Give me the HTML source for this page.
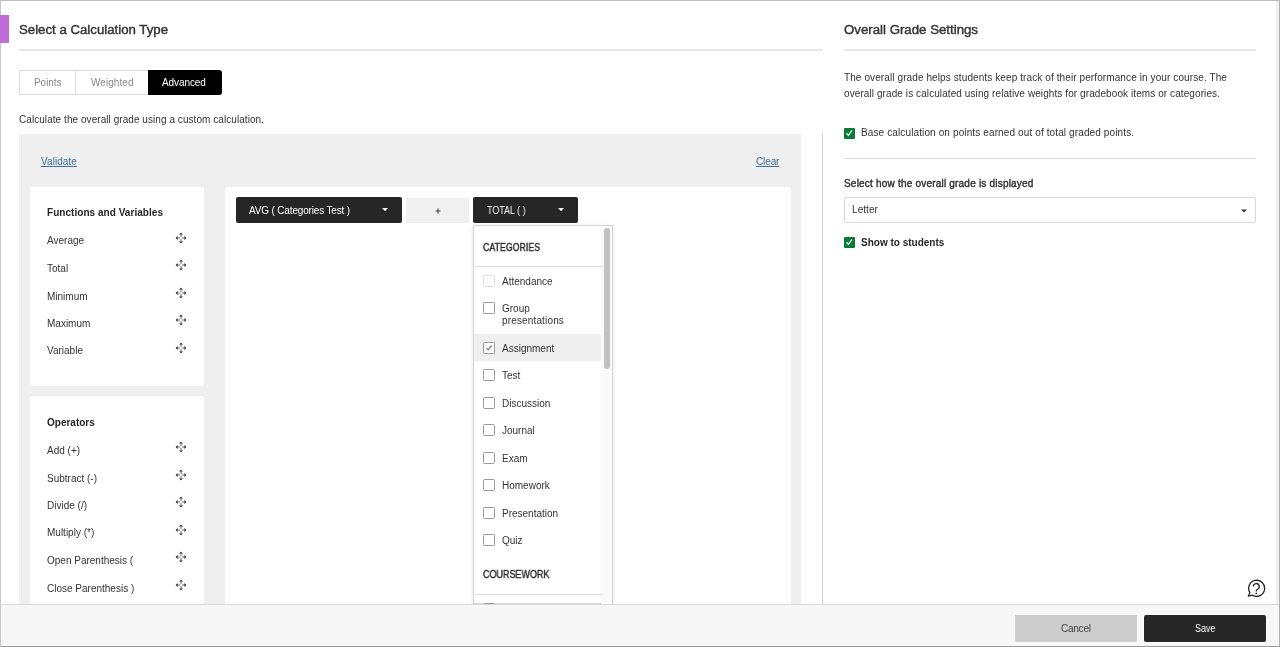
<!DOCTYPE html>
<html><head><meta charset="utf-8"><title>Calculation</title>
<style>
html,body{margin:0;padding:0;width:1280px;height:647px;overflow:hidden;background:#fff;}
body{position:relative;font-family:"Liberation Sans",sans-serif;}
.b{position:absolute;}
.t{position:absolute;white-space:nowrap;font-family:"Liberation Sans",sans-serif;will-change:transform;}
</style></head><body>

<div class='b' style='left:0;top:0;width:1280px;height:1px;background:#bdbdbd'></div>
<div class='b' style='left:0;top:0;width:1px;height:647px;background:#c6c6c6;z-index:8'></div>
<div class='b' style='left:1279px;top:0;width:1px;height:647px;background:#b0b0b0'></div>
<div class='b' style='left:1276px;top:1px;width:3px;height:603px;background:#f0f0f0'></div>
<div class='b' style='left:0;top:15px;width:9px;height:28px;background:#c06cd6;z-index:9'></div>
<div class='b' style='left:19px;top:49px;width:804px;height:2px;background:#e9e9e9'></div>
<div class='b' style='left:19px;top:70px;width:130px;height:25px;border:1px solid #dcdcdc;border-right:none;border-radius:1px 0 0 1px;box-sizing:border-box;background:#fff'></div>
<div class='b' style='left:75px;top:70px;width:1px;height:25px;background:#dcdcdc'></div>
<div class='b' style='left:148px;top:70px;width:74px;height:25px;background:#000;border-radius:0 3px 3px 0'></div>
<div class='b' style='left:19px;top:134px;width:782px;height:470px;background:#efefef'></div>
<div class='b' style='left:30px;top:187px;width:174px;height:199px;background:#fff;border-radius:2px'></div>
<div class='b' style='left:30px;top:396px;width:174px;height:208px;background:#fff;border-radius:2px'></div>
<div class='b' style='left:225px;top:187px;width:566px;height:418px;background:#fff;border-radius:2px'></div>
<div class='b' style='left:235.6px;top:197.3px;width:166.4px;height:25.4px;background:#262626;border-radius:2px'></div>
<div class='b' style='left:406px;top:197.5px;width:63px;height:25px;background:#f0f0f0'></div>
<div class='b' style='left:473.4px;top:197.3px;width:104.6px;height:25.4px;background:#262626;border-radius:2px'></div>
<div class='b' style='left:473px;top:225px;width:140px;height:379px;background:#fff;border:1px solid #d6d6d6;box-sizing:border-box;box-shadow:0 1px 4px rgba(0,0,0,0.12)'></div>
<div class='b' style='left:601px;top:226px;width:11px;height:378px;background:#fafafa'></div>
<div class='b' style='left:604.2px;top:228px;width:5.8px;height:141px;background:#c1c1c1;border-radius:3px'></div>
<div class='b' style='left:474px;top:266px;width:129px;height:1px;background:#dedede'></div>
<div class='b' style='left:474px;top:334.3px;width:127px;height:26.3px;background:#efefef'></div>
<div class='b' style='left:474px;top:593.5px;width:129px;height:1px;background:#dedede'></div>
<div class='b' style='left:822px;top:133px;width:1px;height:471px;background:#cfcfcf'></div>
<div class='b' style='left:844px;top:49px;width:412px;height:2px;background:#e9e9e9'></div>
<div class='b' style='left:844px;top:158px;width:412px;height:1px;background:#dadada'></div>
<div class='b' style='left:844px;top:197px;width:412px;height:26px;border:1px solid #d9d9d9;border-radius:2px;box-sizing:border-box;background:#fff'></div>
<div class='b' style='left:1px;top:604px;width:1278px;height:42px;background:#f7f7f7;border-top:1px solid #dadada;box-sizing:border-box;z-index:5'></div>
<div class='b' style='left:0;top:646px;width:1280px;height:1px;background:#9a9a9a;z-index:6'></div>
<div class='b' style='z-index:6;left:1015px;top:615px;width:122px;height:27px;background:#cdcdcd;border-radius:1px;box-shadow:0 0 0 1px #fff'></div>
<div class='b' style='z-index:6;left:1144px;top:615px;width:122px;height:27px;background:#262626;border-radius:2px;box-shadow:0 0 0 1px #fff'></div>
<div class='t' style='left:19.00px;top:22.00px;font-size:12.5px;line-height:17.5px;font-weight:normal;-webkit-text-stroke:0.4px #333;color:#333;letter-spacing:0.000px;transform:scaleX(1.0580);transform-origin:0 0;'>Select a Calculation Type</div>
<div class='t' style='left:33.90px;top:76.00px;font-size:10px;line-height:14.0px;font-weight:normal;color:#8a8a8a;letter-spacing:-0.049px;'>Points</div>
<div class='t' style='left:90.50px;top:76.00px;font-size:10px;line-height:14.0px;font-weight:normal;color:#8a8a8a;letter-spacing:0.065px;'>Weighted</div>
<div class='t' style='left:162.30px;top:76.00px;font-size:10px;line-height:14.0px;font-weight:normal;color:#fff;letter-spacing:-0.086px;'>Advanced</div>
<div class='t' style='left:19.00px;top:113.00px;font-size:10px;line-height:14.0px;font-weight:normal;color:#333;letter-spacing:0.058px;'>Calculate the overall grade using a custom calculation.</div>
<div class='t' style='left:41.00px;top:155.00px;font-size:10px;line-height:14.0px;font-weight:normal;color:#3a6f96;letter-spacing:0.074px;text-decoration:underline'>Validate</div>
<div class='t' style='left:755.60px;top:155.00px;font-size:10px;line-height:14.0px;font-weight:normal;color:#3a6f96;letter-spacing:-0.121px;text-decoration:underline'>Clear</div>
<div class='t' style='left:47.00px;top:206.00px;font-size:10px;line-height:14.0px;font-weight:bold;color:#262626;letter-spacing:0.042px;'>Functions and Variables</div>
<div class='t' style='left:47.00px;top:234.00px;font-size:10px;line-height:14.0px;font-weight:normal;color:#333;letter-spacing:0.000px;'>Average</div>
<div class='t' style='left:47.00px;top:262.00px;font-size:10px;line-height:14.0px;font-weight:normal;color:#333;letter-spacing:0.000px;'>Total</div>
<div class='t' style='left:47.00px;top:290.00px;font-size:10px;line-height:14.0px;font-weight:normal;color:#333;letter-spacing:0.000px;'>Minimum</div>
<div class='t' style='left:47.00px;top:317.00px;font-size:10px;line-height:14.0px;font-weight:normal;color:#333;letter-spacing:0.000px;'>Maximum</div>
<div class='t' style='left:47.00px;top:344.00px;font-size:10px;line-height:14.0px;font-weight:normal;color:#333;letter-spacing:0.000px;'>Variable</div>
<div class='t' style='left:47.00px;top:416.00px;font-size:10px;line-height:14.0px;font-weight:bold;color:#262626;letter-spacing:0.000px;'>Operators</div>
<div class='t' style='left:47.00px;top:444.00px;font-size:10px;line-height:14.0px;font-weight:normal;color:#333;letter-spacing:0.000px;'>Add (+)</div>
<div class='t' style='left:47.00px;top:472.00px;font-size:10px;line-height:14.0px;font-weight:normal;color:#333;letter-spacing:0.000px;'>Subtract (-)</div>
<div class='t' style='left:47.00px;top:499.00px;font-size:10px;line-height:14.0px;font-weight:normal;color:#333;letter-spacing:0.000px;'>Divide (/)</div>
<div class='t' style='left:47.00px;top:526.00px;font-size:10px;line-height:14.0px;font-weight:normal;color:#333;letter-spacing:0.000px;'>Multiply (*)</div>
<div class='t' style='left:47.00px;top:554.00px;font-size:10px;line-height:14.0px;font-weight:normal;color:#333;letter-spacing:0.000px;'>Open Parenthesis (</div>
<div class='t' style='left:47.00px;top:582.00px;font-size:10px;line-height:14.0px;font-weight:normal;color:#333;letter-spacing:0.000px;'>Close Parenthesis )</div>
<div class='t' style='left:248.70px;top:204.00px;font-size:10px;line-height:14.0px;font-weight:normal;color:#fff;letter-spacing:-0.160px;'>AVG ( Categories Test )</div>
<div class='t' style='left:487.20px;top:204.00px;font-size:10px;line-height:14.0px;font-weight:normal;color:#fff;letter-spacing:0.000px;transform:scaleX(0.8944);transform-origin:0 0;'>TOTAL ( )</div>
<div class='t' style='left:482.80px;top:241.00px;font-size:10px;line-height:14.0px;font-weight:normal;-webkit-text-stroke:0.4px #262626;color:#262626;letter-spacing:0.000px;transform:scaleX(0.8792);transform-origin:0 0;'>CATEGORIES</div>
<div class='t' style='left:502.00px;top:275.00px;font-size:10px;line-height:14.0px;font-weight:normal;color:#333;letter-spacing:0.000px;'>Attendance</div>
<div class='t' style='left:502.00px;top:302.00px;font-size:10px;line-height:14.0px;font-weight:normal;color:#333;letter-spacing:0.000px;'>Group</div>
<div class='t' style='left:502.00px;top:342.00px;font-size:10px;line-height:14.0px;font-weight:normal;color:#333;letter-spacing:0.000px;'>Assignment</div>
<div class='t' style='left:502.00px;top:369.00px;font-size:10px;line-height:14.0px;font-weight:normal;color:#333;letter-spacing:0.000px;'>Test</div>
<div class='t' style='left:502.00px;top:397.00px;font-size:10px;line-height:14.0px;font-weight:normal;color:#333;letter-spacing:0.000px;'>Discussion</div>
<div class='t' style='left:502.00px;top:424.00px;font-size:10px;line-height:14.0px;font-weight:normal;color:#333;letter-spacing:0.000px;'>Journal</div>
<div class='t' style='left:502.00px;top:452.00px;font-size:10px;line-height:14.0px;font-weight:normal;color:#333;letter-spacing:0.000px;'>Exam</div>
<div class='t' style='left:502.00px;top:479.00px;font-size:10px;line-height:14.0px;font-weight:normal;color:#333;letter-spacing:0.000px;'>Homework</div>
<div class='t' style='left:502.00px;top:507.00px;font-size:10px;line-height:14.0px;font-weight:normal;color:#333;letter-spacing:0.000px;'>Presentation</div>
<div class='t' style='left:502.00px;top:534.00px;font-size:10px;line-height:14.0px;font-weight:normal;color:#333;letter-spacing:0.000px;'>Quiz</div>
<div class='t' style='left:502.00px;top:314.00px;font-size:10px;line-height:14.0px;font-weight:normal;color:#333;letter-spacing:0.150px;'>presentations</div>
<div class='t' style='left:482.80px;top:568.00px;font-size:10px;line-height:14.0px;font-weight:normal;-webkit-text-stroke:0.4px #262626;color:#262626;letter-spacing:0.000px;transform:scaleX(0.8984);transform-origin:0 0;'>COURSEWORK</div>
<div class='t' style='left:844.00px;top:22.00px;font-size:12.5px;line-height:17.5px;font-weight:normal;-webkit-text-stroke:0.4px #333;color:#333;letter-spacing:0.000px;transform:scaleX(1.0597);transform-origin:0 0;'>Overall Grade Settings</div>
<div class='t' style='left:844.00px;top:71.00px;font-size:10px;line-height:14.0px;font-weight:normal;color:#333;letter-spacing:0.102px;'>The overall grade helps students keep track of their performance in your course. The</div>
<div class='t' style='left:844.00px;top:87.00px;font-size:10px;line-height:14.0px;font-weight:normal;color:#333;letter-spacing:0.088px;'>overall grade is calculated using relative weights for gradebook items or categories.</div>
<div class='t' style='left:860.80px;top:126.00px;font-size:10px;line-height:14.0px;font-weight:normal;color:#333;letter-spacing:0.122px;'>Base calculation on points earned out of total graded points.</div>
<div class='t' style='left:843.80px;top:177.00px;font-size:10px;line-height:14.0px;font-weight:normal;-webkit-text-stroke:0.4px #333;color:#333;letter-spacing:0.204px;'>Select how the overall grade is displayed</div>
<div class='t' style='left:851.70px;top:203.00px;font-size:10px;line-height:14.0px;font-weight:normal;color:#333;letter-spacing:0.070px;'>Letter</div>
<div class='t' style='left:861.00px;top:236.00px;font-size:10px;line-height:14.0px;font-weight:bold;color:#262626;letter-spacing:-0.003px;'>Show to students</div>
<div class='t' style='left:1061.10px;top:622.00px;font-size:10px;line-height:14.0px;font-weight:normal;color:#444;letter-spacing:-0.240px;z-index:7'>Cancel</div>
<div class='t' style='left:1194.70px;top:622.00px;font-size:10px;line-height:14.0px;font-weight:normal;color:#fff;letter-spacing:0.000px;transform:scaleX(0.8905);transform-origin:0 0;z-index:7'>Save</div>
<svg class='b' style='left:174.80px;top:231.70px' width='12' height='12' viewBox='0 0 12 12'><g fill='none' stroke='#555' stroke-width='0.9'><path d='M6 2.4V5M6 7V9.6M2.4 6H5M7 6H9.6'/></g><g fill='#262626'><path d='M6 0.7L8 2.6H4Z'/><path d='M6 11.3L8 9.4H4Z'/><path d='M0.7 6L2.6 4V8Z'/><path d='M11.3 6L9.4 4V8Z'/></g></svg>
<svg class='b' style='left:174.80px;top:259.20px' width='12' height='12' viewBox='0 0 12 12'><g fill='none' stroke='#555' stroke-width='0.9'><path d='M6 2.4V5M6 7V9.6M2.4 6H5M7 6H9.6'/></g><g fill='#262626'><path d='M6 0.7L8 2.6H4Z'/><path d='M6 11.3L8 9.4H4Z'/><path d='M0.7 6L2.6 4V8Z'/><path d='M11.3 6L9.4 4V8Z'/></g></svg>
<svg class='b' style='left:174.80px;top:286.70px' width='12' height='12' viewBox='0 0 12 12'><g fill='none' stroke='#555' stroke-width='0.9'><path d='M6 2.4V5M6 7V9.6M2.4 6H5M7 6H9.6'/></g><g fill='#262626'><path d='M6 0.7L8 2.6H4Z'/><path d='M6 11.3L8 9.4H4Z'/><path d='M0.7 6L2.6 4V8Z'/><path d='M11.3 6L9.4 4V8Z'/></g></svg>
<svg class='b' style='left:174.80px;top:314.20px' width='12' height='12' viewBox='0 0 12 12'><g fill='none' stroke='#555' stroke-width='0.9'><path d='M6 2.4V5M6 7V9.6M2.4 6H5M7 6H9.6'/></g><g fill='#262626'><path d='M6 0.7L8 2.6H4Z'/><path d='M6 11.3L8 9.4H4Z'/><path d='M0.7 6L2.6 4V8Z'/><path d='M11.3 6L9.4 4V8Z'/></g></svg>
<svg class='b' style='left:174.80px;top:341.70px' width='12' height='12' viewBox='0 0 12 12'><g fill='none' stroke='#555' stroke-width='0.9'><path d='M6 2.4V5M6 7V9.6M2.4 6H5M7 6H9.6'/></g><g fill='#262626'><path d='M6 0.7L8 2.6H4Z'/><path d='M6 11.3L8 9.4H4Z'/><path d='M0.7 6L2.6 4V8Z'/><path d='M11.3 6L9.4 4V8Z'/></g></svg>
<svg class='b' style='left:174.80px;top:441.20px' width='12' height='12' viewBox='0 0 12 12'><g fill='none' stroke='#555' stroke-width='0.9'><path d='M6 2.4V5M6 7V9.6M2.4 6H5M7 6H9.6'/></g><g fill='#262626'><path d='M6 0.7L8 2.6H4Z'/><path d='M6 11.3L8 9.4H4Z'/><path d='M0.7 6L2.6 4V8Z'/><path d='M11.3 6L9.4 4V8Z'/></g></svg>
<svg class='b' style='left:174.80px;top:468.70px' width='12' height='12' viewBox='0 0 12 12'><g fill='none' stroke='#555' stroke-width='0.9'><path d='M6 2.4V5M6 7V9.6M2.4 6H5M7 6H9.6'/></g><g fill='#262626'><path d='M6 0.7L8 2.6H4Z'/><path d='M6 11.3L8 9.4H4Z'/><path d='M0.7 6L2.6 4V8Z'/><path d='M11.3 6L9.4 4V8Z'/></g></svg>
<svg class='b' style='left:174.80px;top:496.20px' width='12' height='12' viewBox='0 0 12 12'><g fill='none' stroke='#555' stroke-width='0.9'><path d='M6 2.4V5M6 7V9.6M2.4 6H5M7 6H9.6'/></g><g fill='#262626'><path d='M6 0.7L8 2.6H4Z'/><path d='M6 11.3L8 9.4H4Z'/><path d='M0.7 6L2.6 4V8Z'/><path d='M11.3 6L9.4 4V8Z'/></g></svg>
<svg class='b' style='left:174.80px;top:523.70px' width='12' height='12' viewBox='0 0 12 12'><g fill='none' stroke='#555' stroke-width='0.9'><path d='M6 2.4V5M6 7V9.6M2.4 6H5M7 6H9.6'/></g><g fill='#262626'><path d='M6 0.7L8 2.6H4Z'/><path d='M6 11.3L8 9.4H4Z'/><path d='M0.7 6L2.6 4V8Z'/><path d='M11.3 6L9.4 4V8Z'/></g></svg>
<svg class='b' style='left:174.80px;top:551.20px' width='12' height='12' viewBox='0 0 12 12'><g fill='none' stroke='#555' stroke-width='0.9'><path d='M6 2.4V5M6 7V9.6M2.4 6H5M7 6H9.6'/></g><g fill='#262626'><path d='M6 0.7L8 2.6H4Z'/><path d='M6 11.3L8 9.4H4Z'/><path d='M0.7 6L2.6 4V8Z'/><path d='M11.3 6L9.4 4V8Z'/></g></svg>
<svg class='b' style='left:174.80px;top:578.70px' width='12' height='12' viewBox='0 0 12 12'><g fill='none' stroke='#555' stroke-width='0.9'><path d='M6 2.4V5M6 7V9.6M2.4 6H5M7 6H9.6'/></g><g fill='#262626'><path d='M6 0.7L8 2.6H4Z'/><path d='M6 11.3L8 9.4H4Z'/><path d='M0.7 6L2.6 4V8Z'/><path d='M11.3 6L9.4 4V8Z'/></g></svg>
<svg class='b' style='left:381.70px;top:207.90px' width='6' height='3.2' viewBox='0 0 6 3.2'><path d='M0 0H6L3 3.2Z' fill='#fff'/></svg>
<svg class='b' style='left:557.70px;top:207.90px' width='6' height='3.2' viewBox='0 0 6 3.2'><path d='M0 0H6L3 3.2Z' fill='#fff'/></svg>
<svg class='b' style='left:1240.50px;top:209.00px' width='6' height='4' viewBox='0 0 6 4'><path d='M0 0.5H6L3 3.5Z' fill='#333'/></svg>
<svg class='b' style='left:434.8px;top:207.8px' width='6' height='6' viewBox='0 0 6 6'><path d='M3 0.6V5.4M0.6 3H5.4' stroke='#444' stroke-width='1.1'/></svg>
<div class='b' style='left:483.00px;top:275.00px;width:12px;height:12px;border:1px solid #e0e0e0;border-radius:1.5px;box-sizing:border-box;background:#fff'></div>
<div class='b' style='left:483.00px;top:302.00px;width:12px;height:12px;border:1px solid #9a9a9a;border-radius:1.5px;box-sizing:border-box;background:#fff'></div>
<div class='b' style='left:483.00px;top:342.00px;width:12px;height:12px;border:1px solid #9a9a9a;border-radius:1.5px;box-sizing:border-box;background:#fff'></div>
<svg class='b' style='left:483.00px;top:342.00px' width='12' height='11' viewBox='0 0 12 11'><path d='M3.3 6.1L5.2 7.9L8.6 3.6' fill='none' stroke='#777' stroke-width='1.1'/></svg>
<div class='b' style='left:483.00px;top:369.00px;width:12px;height:12px;border:1px solid #9a9a9a;border-radius:1.5px;box-sizing:border-box;background:#fff'></div>
<div class='b' style='left:483.00px;top:397.00px;width:12px;height:12px;border:1px solid #9a9a9a;border-radius:1.5px;box-sizing:border-box;background:#fff'></div>
<div class='b' style='left:483.00px;top:424.00px;width:12px;height:12px;border:1px solid #9a9a9a;border-radius:1.5px;box-sizing:border-box;background:#fff'></div>
<div class='b' style='left:483.00px;top:452.00px;width:12px;height:12px;border:1px solid #9a9a9a;border-radius:1.5px;box-sizing:border-box;background:#fff'></div>
<div class='b' style='left:483.00px;top:479.00px;width:12px;height:12px;border:1px solid #9a9a9a;border-radius:1.5px;box-sizing:border-box;background:#fff'></div>
<div class='b' style='left:483.00px;top:507.00px;width:12px;height:12px;border:1px solid #9a9a9a;border-radius:1.5px;box-sizing:border-box;background:#fff'></div>
<div class='b' style='left:483.00px;top:534.00px;width:12px;height:12px;border:1px solid #9a9a9a;border-radius:1.5px;box-sizing:border-box;background:#fff'></div>
<div class='b' style='left:483.00px;top:603.00px;width:12px;height:12px;border:1px solid #9a9a9a;border-radius:1.5px;box-sizing:border-box;background:#fff'></div>
<div class='b' style='left:844px;top:128px;width:11px;height:11px;background:#0c7a37;border-radius:1px'></div>
<svg class='b' style='left:844px;top:128px' width='11' height='11' viewBox='0 0 11 11'><path d='M2.5 5.3L4.4 7.3L7.9 2.5' fill='none' stroke='#d2f5dc' stroke-width='1.4'/></svg>
<div class='b' style='left:844px;top:237px;width:11px;height:11px;background:#0c7a37;border-radius:1px'></div>
<svg class='b' style='left:844px;top:237px' width='11' height='11' viewBox='0 0 11 11'><path d='M2.5 5.3L4.4 7.3L7.9 2.5' fill='none' stroke='#d2f5dc' stroke-width='1.4'/></svg>
<svg class='b' style='left:1246px;top:578px' width='20' height='20' viewBox='0 0 20 20'><path d='M2.3 18.2L3.9 14.6A8 8 0 1 1 6.6 17.2Z' fill='none' stroke='#262626' stroke-width='1.3' stroke-linejoin='round'/><path d='M7.3 8.6A3 3 0 1 1 11.4 11.3C10.6 11.8 10.2 12.3 10.2 13.6' fill='none' stroke='#262626' stroke-width='1.3'/><circle cx='10.2' cy='15.4' r='0.85' fill='#262626'/></svg>
</body></html>
